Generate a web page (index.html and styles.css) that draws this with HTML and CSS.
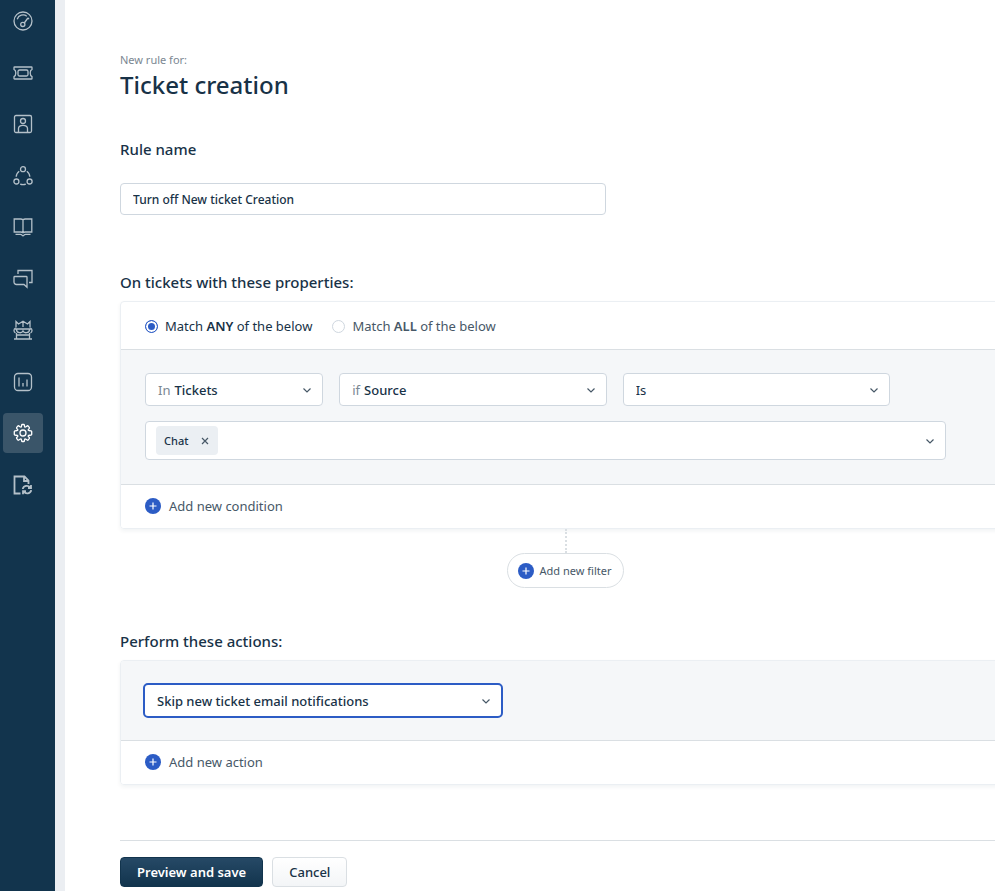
FILE: index.html
```html
<!DOCTYPE html>
<html lang="en">
<head>
    <meta charset="UTF-8">
    <meta name="viewport" content="width=device-width, initial-scale=1.0">
    <title>New rule | Ticket creation</title>
    <link rel="stylesheet" href="styles.css">
</head>
<body>
    <div class="app">
        <nav class="sidebar" aria-label="Main">
            <div class="nav-list">
                <a href="#" class="nav-item" aria-label="Dashboard">
                    <svg viewBox="0 0 20 20"><circle cx="10" cy="10" r="9"/><path d="M4.2 8.2a6.2 6.2 0 0 1 9.6-3M15.9 8.2l-.8-1.4M11.3 12l3.6-5"/><circle cx="9.8" cy="13.4" r="2.1"/></svg>
                </a>
                <a href="#" class="nav-item" aria-label="Tickets">
                    <svg viewBox="0 0 20 20"><path d="M1.6 4h16.8c.4 0 .6.2.6.6v1.8c-2.4 1.2-2.4 6 0 7.2v1.8c0 .4-.2.6-.6.6H1.6c-.4 0-.6-.2-.6-.6v-1.8c2.4-1.2 2.4-6 0-7.2V4.6c0-.4.2-.6.6-.6z"/><rect x="5" y="7" width="10" height="6" rx="1.5"/></svg>
                </a>
                <a href="#" class="nav-item" aria-label="Contacts">
                    <svg viewBox="0 0 20 20"><rect x="1.5" y="1.5" width="17" height="17" rx="1.5"/><circle cx="10" cy="7" r="2.5"/><path d="M5.5 18v-3.5c0-4.300 9-4.300 9 0V18"/></svg>
                </a>
                <a href="#" class="nav-item" aria-label="Social">
                    <svg viewBox="0 0 20 20"><circle cx="10" cy="3.2" r="2.5"/><circle cx="3.4" cy="15.5" r="2.5"/><circle cx="16.6" cy="15.5" r="2.5"/><path d="M6.2 5.2C4.400 6.5 3.300 8.300 3.2 10.800M13.800 5.2c1.800 1.300 2.900 3.100 3 5.600M7.2 18.2c1.900.7 3.700.7 5.600 0"/></svg>
                </a>
                <a href="#" class="nav-item" aria-label="Solutions">
                    <svg viewBox="0 0 20 20"><path d="M10 2.800v12.400M1.2 2h6.600c1.300 0 2.200.8 2.200.8s.9-.8 2.200-.8h6.600v13h-6.600c-1.300 0-2.200.6-2.200.6S9.100 15 7.800 15H1.2zM2.5 17.300h5c1.5 0 1.5 1.5 2.5 1.5s1-1.5 2.5-1.5h5"/></svg>
                </a>
                <a href="#" class="nav-item" aria-label="Forums">
                    <svg viewBox="0 0 20 20"><path d="M5 5V1.5h14v12h-3"/><path d="M1.8 7.5h11.4c.5 0 .8.3.8.8v10l-3-2.800H3.5C2 15.5 1 14.5 1 13V8.300c0-.5.3-.8.8-.8z"/></svg>
                </a>
                <a href="#" class="nav-item" aria-label="Freddy">
                    <svg viewBox="0 0 20 20"><path d="M3 7.5V1.5L5.5 4 10 1.2 14.5 4 17 1.5v6M10 1.2V7M2 9h16M2.5 8C.5 9 .5 12 2.5 13M17.5 8c2 1 2 4 0 5M3.5 9.5c0 4 5.5 4 6.5 1.5 1 2.5 6.5 2.5 6.5-1.5M3.5 13v6M16.5 13v6M3.5 15h13M1 19h18"/></svg>
                </a>
                <a href="#" class="nav-item" aria-label="Analytics">
                    <svg viewBox="0 0 20 20"><rect x="1.5" y="1.5" width="17" height="17" rx="3.5"/><path d="M6 5.5v9M10 11v3.5M14 7.5v7"/></svg>
                </a>
                <a href="#" class="nav-item active" aria-label="Admin" aria-current="page">
                    <svg viewBox="0 0 20 20"><circle cx="10" cy="10" r="3"/><path d="M8 4.1c.9-.3.2-2.600 1-2.600h2c.8 0 .1 2.300 1 2.600s2.200-2 3.100-1.200l1.300 1.800c.6.8-1.700 1.600-1.200 2.500s3.500.2 3.500 1.200v3.200c0 1-3 .3-3.500 1.200s1.800 1.700 1.200 2.500l-1.300 1.800c-.9.8-2.200-1.500-3.100-1.200s-.2 2.600-1 2.600H9c-.8 0-.1-2.300-1-2.600s-2.200 2-3.100 1.200l-1.300-1.800c-.6-.8 1.700-1.600 1.200-2.500s-3.500-.2-3.500-1.200V8.400c0-1 3-.3 3.500-1.200S3 5.500 3.600 4.700l1.300-1.800C5.800 2.100 7.100 4.400 8 4.100z"/></svg>
                </a>
                <a href="#" class="nav-item" aria-label="Updates">
                    <svg viewBox="0 0 20 20" class="heavy"><path d="M7.5 18.5h-6v-17h10l4 4V9M11 2v4h4.5"/><path d="M9.800 14c.5-3.600 5.5-4.200 7.400-1.400M18 10v3h-3M18.2 15.2c-.5 3.600-5.5 4.200-7.400 1.400M10 19.2v-3h3"/></svg>
                </a>
            </div>
        </nav>

        <main class="content">
            <header class="page-header">
                <p class="eyebrow">New rule for:</p>
                <h1>Ticket creation</h1>
            </header>

            <form class="rule-form">
                <label class="section-title" for="ruleName">Rule name</label>
                <input type="text" class="rule-name" id="ruleName" value="Turn off New ticket Creation">

                <h2 class="section-title">On tickets with these properties:</h2>
                <section class="card">
                    <div class="match-row">
                        <label class="match"><input type="radio" name="match" checked><span>Match <b>ANY</b> of the below</span></label>
                        <label class="match"><input type="radio" name="match"><span>Match <b>ALL</b> of the below</span></label>
                    </div>
                    <div class="card-body">
                        <div class="condition">
                            <div class="select-box">
                                <label for="scope">In</label>
                                <select id="scope"><option>Tickets</option></select>
                                <svg class="chevron" viewBox="0 0 10 10"><path d="M1.5 3.5L5 7l3.5-3.5"/></svg>
                            </div>
                            <div class="select-box">
                                <label for="field">if</label>
                                <select id="field"><option>Source</option></select>
                                <svg class="chevron" viewBox="0 0 10 10"><path d="M1.5 3.5L5 7l3.5-3.5"/></svg>
                            </div>
                            <div class="select-box operator">
                                <select id="operator" aria-label="Operator"><option>Is</option></select>
                                <svg class="chevron" viewBox="0 0 10 10"><path d="M1.5 3.5L5 7l3.5-3.5"/></svg>
                            </div>
                        </div>
                        <div class="multi-select">
                            <span class="tag">Chat
                                <button type="button" aria-label="Remove Chat"><svg viewBox="0 0 10 10"><path d="M2 2l6 6M8 2l-6 6"/></svg></button>
                            </span>
                            <input type="text" aria-label="Source values">
                            <svg class="chevron" viewBox="0 0 10 10"><path d="M1.5 3.5L5 7l3.5-3.5"/></svg>
                        </div>
                    </div>
                    <div class="card-footer">
                        <button type="button" class="add-link">
                            <svg class="plus" viewBox="0 0 16 16"><circle cx="8" cy="8" r="8"/><path d="M8 4.5v7M4.5 8h7"/></svg>
                            Add new condition
                        </button>
                    </div>
                </section>

                <div class="filter-row">
                    <button type="button" class="add-filter">
                        <svg class="plus" viewBox="0 0 16 16"><circle cx="8" cy="8" r="8"/><path d="M8 4.5v7M4.5 8h7"/></svg>
                        Add new filter
                    </button>
                </div>

                <h2 class="section-title">Perform these actions:</h2>
                <section class="card">
                    <div class="card-body action-body">
                        <div class="select-box focused">
                            <select id="action" aria-label="Action"><option>Skip new ticket email notifications</option></select>
                            <svg class="chevron" viewBox="0 0 10 10"><path d="M1.5 3.5L5 7l3.5-3.5"/></svg>
                        </div>
                    </div>
                    <div class="card-footer">
                        <button type="button" class="add-link">
                            <svg class="plus" viewBox="0 0 16 16"><circle cx="8" cy="8" r="8"/><path d="M8 4.5v7M4.5 8h7"/></svg>
                            Add new action
                        </button>
                    </div>
                </section>

                <div class="form-actions">
                    <button type="submit" class="btn btn-primary">Preview and save</button>
                    <button type="button" class="btn">Cancel</button>
                </div>
            </form>
        </main>
    </div>
</body>
</html>
```
FILE: styles.css
```css
:root {
    --navy: #12344d;
    --text: #183247;
    --muted: #475867;
    --light: #7b8792;
    --blue: #2c5cc5;
    --border: #cfd7df;
    --line: #dadfe3;
    --panel: #f5f7f9;
}

* {
    box-sizing: border-box;
    margin: 0;
    padding: 0;
}

body {
    background: #fff;
    color: var(--text);
    font-family: 'Segoe UI', 'Noto Sans', sans-serif;
    font-size: 13px;
    line-height: 20px;
}

button,
input,
select {
    font: inherit;
    color: inherit;
}

button {
    border: none;
    background: none;
    cursor: pointer;
}

svg {
    fill: none;
    stroke: currentColor;
    flex-shrink: 0;
}

.app {
    display: flex;
    min-height: 100vh;
}

/* Sidebar */
.sidebar {
    width: 65px;
    flex-shrink: 0;
    padding: 1px 3px;
    background: var(--navy);
    border-right: 10px solid #ebeef2;
}

.nav-list {
    display: flex;
    flex-direction: column;
    justify-content: space-between;
    height: 504px;
}

.nav-item {
    display: grid;
    place-items: center;
    width: 40px;
    height: 40px;
    border-radius: 4px;
    color: #b4c0c9;
}

.nav-item svg {
    width: 20px;
    height: 20px;
    stroke-width: 1.3;
}

.nav-item .heavy {
    stroke-width: 1.8;
}

.nav-item.active {
    background: #3a5569;
    color: #fff;
}

/* Page */
.content {
    flex: 1;
    min-width: 0;
    overflow: hidden;
    padding: 50px 0 4px 55px;
}

.page-header {
    margin-bottom: 39px;
}

.eyebrow {
    color: var(--light);
    font-size: 11px;
}

h1 {
    font-size: 24px;
    font-weight: 500;
    line-height: 30px;
}

.section-title {
    display: block;
    font-size: 15px;
    font-weight: 500;
    line-height: 20px;
}

.rule-form {
    margin-right: -16px;
}

.rule-name {
    display: block;
    width: 486px;
    max-width: 100%;
    height: 32px;
    margin: 24px 0 57px;
    padding: 0 12px;
    border: 1px solid var(--border);
    border-radius: 4px;
    font-size: 12px;
    font-weight: 500;
    outline: none;
}

.card {
    margin-top: 9px;
    border: 1px solid #ebeff3;
    border-radius: 4px;
    box-shadow: 0 2px 4px rgba(24, 50, 71, 0.06);
    overflow: hidden;
}

.match-row {
    display: flex;
    gap: 20px;
    padding: 14px 24px 13px;
}

.match {
    display: flex;
    align-items: center;
    gap: 7px;
    color: var(--muted);
}

.match b {
    font-weight: 600;
}

.match:first-child {
    color: var(--text);
}

.match input {
    appearance: none;
    width: 13px;
    height: 13px;
    border: 1px solid var(--border);
    border-radius: 50%;
    background: #fff;
}

.match input:checked {
    border-color: var(--blue);
    background: var(--blue);
    box-shadow: inset 0 0 0 2px #fff;
}

.card-body {
    padding: 23px 64px 24px 24px;
    background: var(--panel);
}

.match-row + .card-body {
    border-top: 1px solid var(--line);
}

.condition {
    display: grid;
    grid-template-columns: 2fr 3fr 3fr;
    gap: 16px;
    margin: 0 56px 15px 0;
}

.select-box {
    display: flex;
    align-items: center;
    gap: 4px;
    height: 33px;
    padding: 0 10px 0 12px;
    border: 1px solid var(--border);
    border-radius: 4px;
    background: #fff;
}

.select-box label {
    color: var(--light);
}

.select-box select {
    flex: 1;
    min-width: 0;
    border: none;
    background: none;
    font-weight: 500;
    appearance: none;
    outline: none;
}

.operator select {
    font-weight: 400;
}

.focused {
    width: 360px;
    height: 35px;
    margin-left: -2px;
    border: 2px solid var(--blue);
    border-radius: 5px;
}

.chevron {
    width: 10px;
    height: 10px;
    color: var(--muted);
    stroke-width: 1.2;
}

.multi-select {
    display: flex;
    align-items: center;
    height: 39px;
    padding: 0 10px;
    border: 1px solid var(--border);
    border-radius: 4px;
    background: #fff;
}

.multi-select input {
    flex: 1;
    min-width: 0;
    border: none;
    outline: none;
}

.tag {
    display: flex;
    align-items: center;
    gap: 12px;
    height: 29px;
    padding: 0 8px;
    border-radius: 4px;
    background: #ebeff3;
    font-size: 11px;
    font-weight: 500;
}

.tag button {
    display: flex;
    color: var(--muted);
}

.tag svg {
    width: 10px;
    height: 10px;
    stroke-width: 1.2;
}

.card-footer {
    padding: 11px 24px 12px;
    border-top: 1px solid var(--line);
    background: #fff;
}

.add-link {
    display: flex;
    align-items: center;
    gap: 8px;
    color: var(--muted);
}

.plus {
    width: 16px;
    height: 16px;
    stroke: #fff;
    stroke-width: 1.2;
}

.plus circle {
    fill: var(--blue);
    stroke: none;
}

/* Add filter pill with its dashed connector */
.filter-row {
    display: flex;
    flex-direction: column;
    align-items: center;
    margin-bottom: 43px;
}

.filter-row::before {
    content: "";
    height: 24px;
    border-left: 2px dotted var(--line);
}

.add-filter {
    display: flex;
    align-items: center;
    gap: 6px;
    height: 35px;
    padding: 0 12px 0 10px;
    border: 1px solid var(--line);
    border-radius: 18px;
    background: #fff;
    color: var(--muted);
    font-size: 11px;
}

.action-body {
    padding-top: 22px;
    padding-bottom: 22px;
}

.form-actions {
    display: flex;
    gap: 9px;
    margin-top: 55px;
    padding-top: 16px;
    border-top: 1px solid var(--line);
}

.btn {
    height: 30px;
    padding: 0 16px;
    border: 1px solid var(--line);
    border-radius: 4px;
    background: linear-gradient(#fff, #f3f5f7);
    font-weight: 500;
}

.btn-primary {
    border-color: var(--navy);
    background: linear-gradient(#264966, #12344d);
    color: #fff;
    font-weight: 600;
}
```
